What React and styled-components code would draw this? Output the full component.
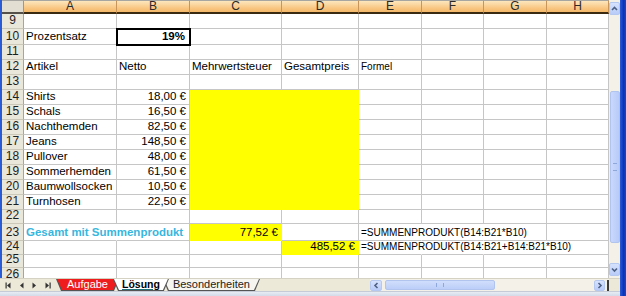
import React from "react";
import styled, { createGlobalStyle } from "styled-components";

const GlobalStyle = createGlobalStyle`
  html, body { margin: 0; padding: 0; background: #fff; }
  body { font-family: "Liberation Sans", Arial, sans-serif; }
`;

const COLS = [93, 73, 92, 77, 63, 62, 63, 62];
const LETTERS = ["A", "B", "C", "D", "E", "F", "G", "H"];
const YELLOW = "#ffff00";

const articles = [
  ["Shirts", "18,00 €"],
  ["Schals", "16,50 €"],
  ["Nachthemden", "82,50 €"],
  ["Jeans", "148,50 €"],
  ["Pullover", "48,00 €"],
  ["Sommerhemden", "61,50 €"],
  ["Baumwollsocken", "10,50 €"],
  ["Turnhosen", "22,50 €"],
];

const ROWS = [
  { n: 9, h: 15 },
  {
    n: 10,
    h: 16,
    cells: {
      A: { t: "Prozentsatz" },
      B: { t: "19%", right: true, bold: true, boxed: true },
    },
  },
  { n: 11, h: 15 },
  {
    n: 12,
    h: 15,
    cells: {
      A: { t: "Artikel" },
      B: { t: "Netto" },
      C: { t: "Mehrwertsteuer" },
      D: { t: "Gesamtpreis" },
      E: { t: "Formel", small: true },
    },
  },
  { n: 13, h: 15 },
  ...articles.map(([name, price], i) => ({
    n: 14 + i,
    h: 15,
    cells: {
      A: { t: name },
      B: { t: price, right: true },
      C: { fill: YELLOW },
      D: { fill: YELLOW },
    },
  })),
  { n: 22, h: 14 },
  {
    n: 23,
    h: 17,
    cells: {
      A: { t: "Gesamt mit Summenprodukt", bold: true, color: "#38b6de", open: true },
      C: { t: "77,52 €", right: true, fill: YELLOW },
      E: { t: "=SUMMENPRODUKT(B14:B21*B10)", small: true, open: true },
      F: { open: true },
    },
  },
  {
    n: 24,
    h: 14,
    cells: {
      D: { t: "485,52 €", right: true, fill: YELLOW },
      E: { t: "=SUMMENPRODUKT(B14:B21+B14:B21*B10)", small: true, open: true },
      F: { open: true },
      G: { open: true },
    },
  },
  { n: 25, h: 13 },
  { n: 26, h: 15 },
];

const Window = styled.div`
  width: 626px;
  height: 296px;
  display: flex;
  overflow: hidden;
  background: #ece9d8;
`;

const Main = styled.div`
  width: 620px;
  display: flex;
  flex-direction: column;
`;

const Edge = styled.div`
  width: 6px;
  background: linear-gradient(90deg, #2c5ad8, #0a34b8 60%, #1a46c8);
`;

const Body = styled.div`
  height: 278px;
  display: flex;
`;

const Sheet = styled.div`
  width: 607px;
  height: 278px;
  overflow: hidden;
  border-left: 2px solid #2a5bd7;
  background: #fff;
  display: grid;
  grid-template-columns: 22px ${COLS.map((w) => w + "px").join(" ")};
  grid-template-rows: 14px ${ROWS.map((r) => r.h + "px").join(" ")};
`;

const Corner = styled.div`
  background: #e2dfd2;
  border-top: 1px solid #a7a6a0;
  border-right: 1px solid #9d9a8a;
  border-bottom: 2px solid #55504a;
`;

const ColHead = styled.div`
  background: linear-gradient(#fde6bd, #f8c47e 70%, #f4b868);
  border-top: 1px solid #a7a6a0;
  border-right: 1px solid #c8955a;
  border-bottom: 2px solid #3a2a12;
  color: #2a2a2a;
  font-size: 12px;
  line-height: 11px;
  display: flex;
  justify-content: center;
  align-items: center;
`;

const RowHead = styled.div`
  background: #e9e6da;
  border-right: 1px solid #a9a693;
  border-bottom: 1px solid #cbc8b9;
  color: #1e1e1e;
  font-size: 12px;
  line-height: 13px;
  display: flex;
  justify-content: center;
  align-items: flex-end;
  padding-bottom: 1px;
`;

const Cell = styled.div`
  position: relative;
  min-width: 0;
  background: ${({ $fill }) => $fill || "transparent"};
  border-right: 1px solid
    ${({ $fill, $open }) => ($open ? "transparent" : $fill || "#c6c6c6")};
  border-bottom: 1px solid ${({ $fill }) => $fill || "#c6c6c6"};
  outline: ${({ $boxed }) => ($boxed ? "2px solid #000" : "none")};
  outline-offset: -1px;
  z-index: ${({ $boxed }) => ($boxed ? 1 : "auto")};
  display: flex;
  align-items: flex-end;
  justify-content: ${({ $right }) => ($right ? "flex-end" : "flex-start")};
  padding: 0 ${({ $boxed }) => ($boxed ? "4px" : "3px")} 1px 2px;
  white-space: nowrap;
  overflow: visible;
  font-size: ${({ $small }) => ($small ? "10px" : "11.5px")};
  line-height: 13px;
  font-weight: ${({ $bold }) => ($bold ? "bold" : "normal")};
  color: ${({ $color }) => $color || "#000"};
`;

const VScroll = styled.div`
  width: 11px;
  background: #f3f1e8;
  display: flex;
  flex-direction: column;
  align-items: center;
  padding: 2px 0 2px;
`;

const ScrollBtn = styled.div`
  width: ${({ $w }) => $w || 11}px;
  height: ${({ $h }) => $h || 13}px;
  flex: none;
  border-radius: 2px;
  background: linear-gradient(#d6e2fd, #b9ccf8);
  border: 1px solid #b5c8f0;
  box-sizing: border-box;
  display: flex;
  align-items: center;
  justify-content: center;
`;

const Gap = styled.div`
  flex: ${({ $grow }) => ($grow ? 1 : "none")};
  height: ${({ $h }) => $h || 0}px;
  width: ${({ $w }) => $w || 0}px;
`;

const VThumb = styled.div`
  width: 10px;
  height: 152px;
  flex: none;
  border-radius: 2px;
  background: linear-gradient(90deg, #c9d8fd, #b8cbf7);
  border: 1px solid #b0c4ee;
  box-sizing: border-box;
  display: flex;
  align-items: center;
  justify-content: center;
`;

const Grip = styled.div`
  width: ${({ $v }) => ($v ? 4 : 6)}px;
  height: ${({ $v }) => ($v ? 6 : 4)}px;
  border-${({ $v }) => ($v ? "top" : "left")}: 1px solid #8fa8dc;
  border-${({ $v }) => ($v ? "bottom" : "right")}: 1px solid #8fa8dc;
`;

const TabBar = styled.div`
  height: 12px;
  display: flex;
  align-items: stretch;
  background: #ece9d8;
  border-top: 1px solid #d5d2c4;
`;

const Nav = styled.div`
  width: 54px;
  padding-left: 2px;
  display: flex;
  align-items: center;
`;

const NavBtn = styled.div`
  width: 13px;
  display: flex;
  justify-content: center;
  align-items: center;
`;

const Tabs = styled.div`
  display: flex;
  align-items: stretch;
`;

const TabOuter = styled.div`
  position: relative;
  z-index: ${({ $active }) => ($active ? 2 : 1)};
  margin-left: ${({ $first }) => ($first ? 0 : -6)}px;
  background: #555;
  clip-path: polygon(0 0, 100% 0, calc(100% - 5px) 100%, 5px 100%);
  padding: 0 1px 1px;
  display: flex;
`;

const TabInner = styled.div`
  flex: 1;
  background: ${({ $bg }) => $bg};
  clip-path: polygon(0 0, 100% 0, calc(100% - 5px) 100%, 5px 100%);
  padding: 0 ${({ $px }) => $px}px;
  font-size: ${({ $active }) => ($active ? 10.5 : 11)}px;
  line-height: 11px;
  font-weight: ${({ $active }) => ($active ? "bold" : "normal")};
  color: ${({ $fg }) => $fg};
  text-decoration: ${({ $active }) => ($active ? "underline" : "none")};
  text-decoration-color: #1d6f78;
  text-decoration-thickness: 2px;
  text-underline-offset: 1px;
  white-space: nowrap;
  display: flex;
  align-items: center;
`;

const HScroll = styled.div`
  width: 239px;
  margin-left: auto;
  background: #f3f1e8;
  display: flex;
  align-items: center;
`;

const HThumb = styled.div`
  width: 110px;
  height: 10px;
  border-radius: 2px;
  background: linear-gradient(#d0defd, #bccef8);
  border: 1px solid #b0c4ee;
  box-sizing: border-box;
  display: flex;
  align-items: center;
  justify-content: center;
`;

const Split = styled.div`
  width: 2px;
  height: 11px;
  background: #3b3b3b;
`;

const CornerBox = styled.div`
  width: 11px;
  background: #ece9d8;
`;

const Strip = styled.div`
  flex: 1;
  background: linear-gradient(#e8ecf3, #d3dbe8);
  border-top: 1px solid #c5ccd8;
`;

const Chevron = ({ dir }) => {
  const pts = {
    up: "2,6 4.5,3.5 7,6",
    down: "2,3.5 4.5,6 7,3.5",
    left: "5.5,2 3,4.5 5.5,7",
    right: "3.5,2 6,4.5 3.5,7",
  }[dir];
  return (
    <svg width="9" height="9" viewBox="0 0 9 9">
      <polyline points={pts} fill="none" stroke="#4d6185" strokeWidth="1.6" />
    </svg>
  );
};

const NavIcon = ({ kind }) => {
  const left = kind === "first" || kind === "prev";
  const bar = kind === "first" || kind === "last";
  return (
    <svg width="7" height="7" viewBox="0 0 7 7">
      {left ? (
        <polygon points="5.5,0.5 2,3.5 5.5,6.5" fill="#333" />
      ) : (
        <polygon points="1.5,0.5 5,3.5 1.5,6.5" fill="#333" />
      )}
      {bar && (
        <rect x={left ? 0.5 : 5.5} y="0.5" width="1.2" height="6" fill="#333" />
      )}
    </svg>
  );
};

const SheetTab = ({ label, bg, fg, active, first, px }) => (
  <TabOuter $active={active} $first={first}>
    <TabInner $bg={bg} $fg={fg} $active={active} $px={px}>
      {label}
    </TabInner>
  </TabOuter>
);

export default function App() {
  return (
    <>
      <GlobalStyle />
      <Window>
        <Main>
          <Body>
            <Sheet>
              <Corner />
              {LETTERS.map((l) => (
                <ColHead key={l}>{l}</ColHead>
              ))}
              {ROWS.map((row) => (
                <React.Fragment key={row.n}>
                  <RowHead>{row.n}</RowHead>
                  {LETTERS.map((l) => {
                    const c = (row.cells && row.cells[l]) || {};
                    return (
                      <Cell
                        key={l}
                        $fill={c.fill}
                        $right={c.right}
                        $bold={c.bold}
                        $small={c.small}
                        $color={c.color}
                        $boxed={c.boxed}
                        $open={c.open}
                      >
                        {c.t}
                      </Cell>
                    );
                  })}
                </React.Fragment>
              ))}
            </Sheet>
            <VScroll>
              <ScrollBtn>
                <Chevron dir="up" />
              </ScrollBtn>
              <Gap $h={76} />
              <VThumb>
                <Grip $v />
              </VThumb>
              <Gap $grow />
              <ScrollBtn>
                <Chevron dir="down" />
              </ScrollBtn>
            </VScroll>
          </Body>
          <TabBar>
            <Nav>
              <NavBtn>
                <NavIcon kind="first" />
              </NavBtn>
              <NavBtn>
                <NavIcon kind="prev" />
              </NavBtn>
              <NavBtn>
                <NavIcon kind="next" />
              </NavBtn>
              <NavBtn>
                <NavIcon kind="last" />
              </NavBtn>
            </Nav>
            <Tabs>
              <SheetTab label="Aufgabe" bg="#ee1c1c" fg="#fff" first px={10} />
              <SheetTab label="Lösung" bg="#fff" fg="#000" active px={8} />
              <SheetTab label="Besonderheiten" bg="#f6f5ef" fg="#222" px={9} />
            </Tabs>
            <HScroll>
              <ScrollBtn $w={12} $h={11}>
                <Chevron dir="left" />
              </ScrollBtn>
              <Gap $w={3} />
              <HThumb>
                <Grip />
              </HThumb>
              <Gap $grow />
              <ScrollBtn $w={11} $h={11}>
                <Chevron dir="right" />
              </ScrollBtn>
              <Gap $w={2} />
              <Split />
            </HScroll>
            <CornerBox />
          </TabBar>
          <Strip />
        </Main>
        <Edge />
      </Window>
    </>
  );
}
